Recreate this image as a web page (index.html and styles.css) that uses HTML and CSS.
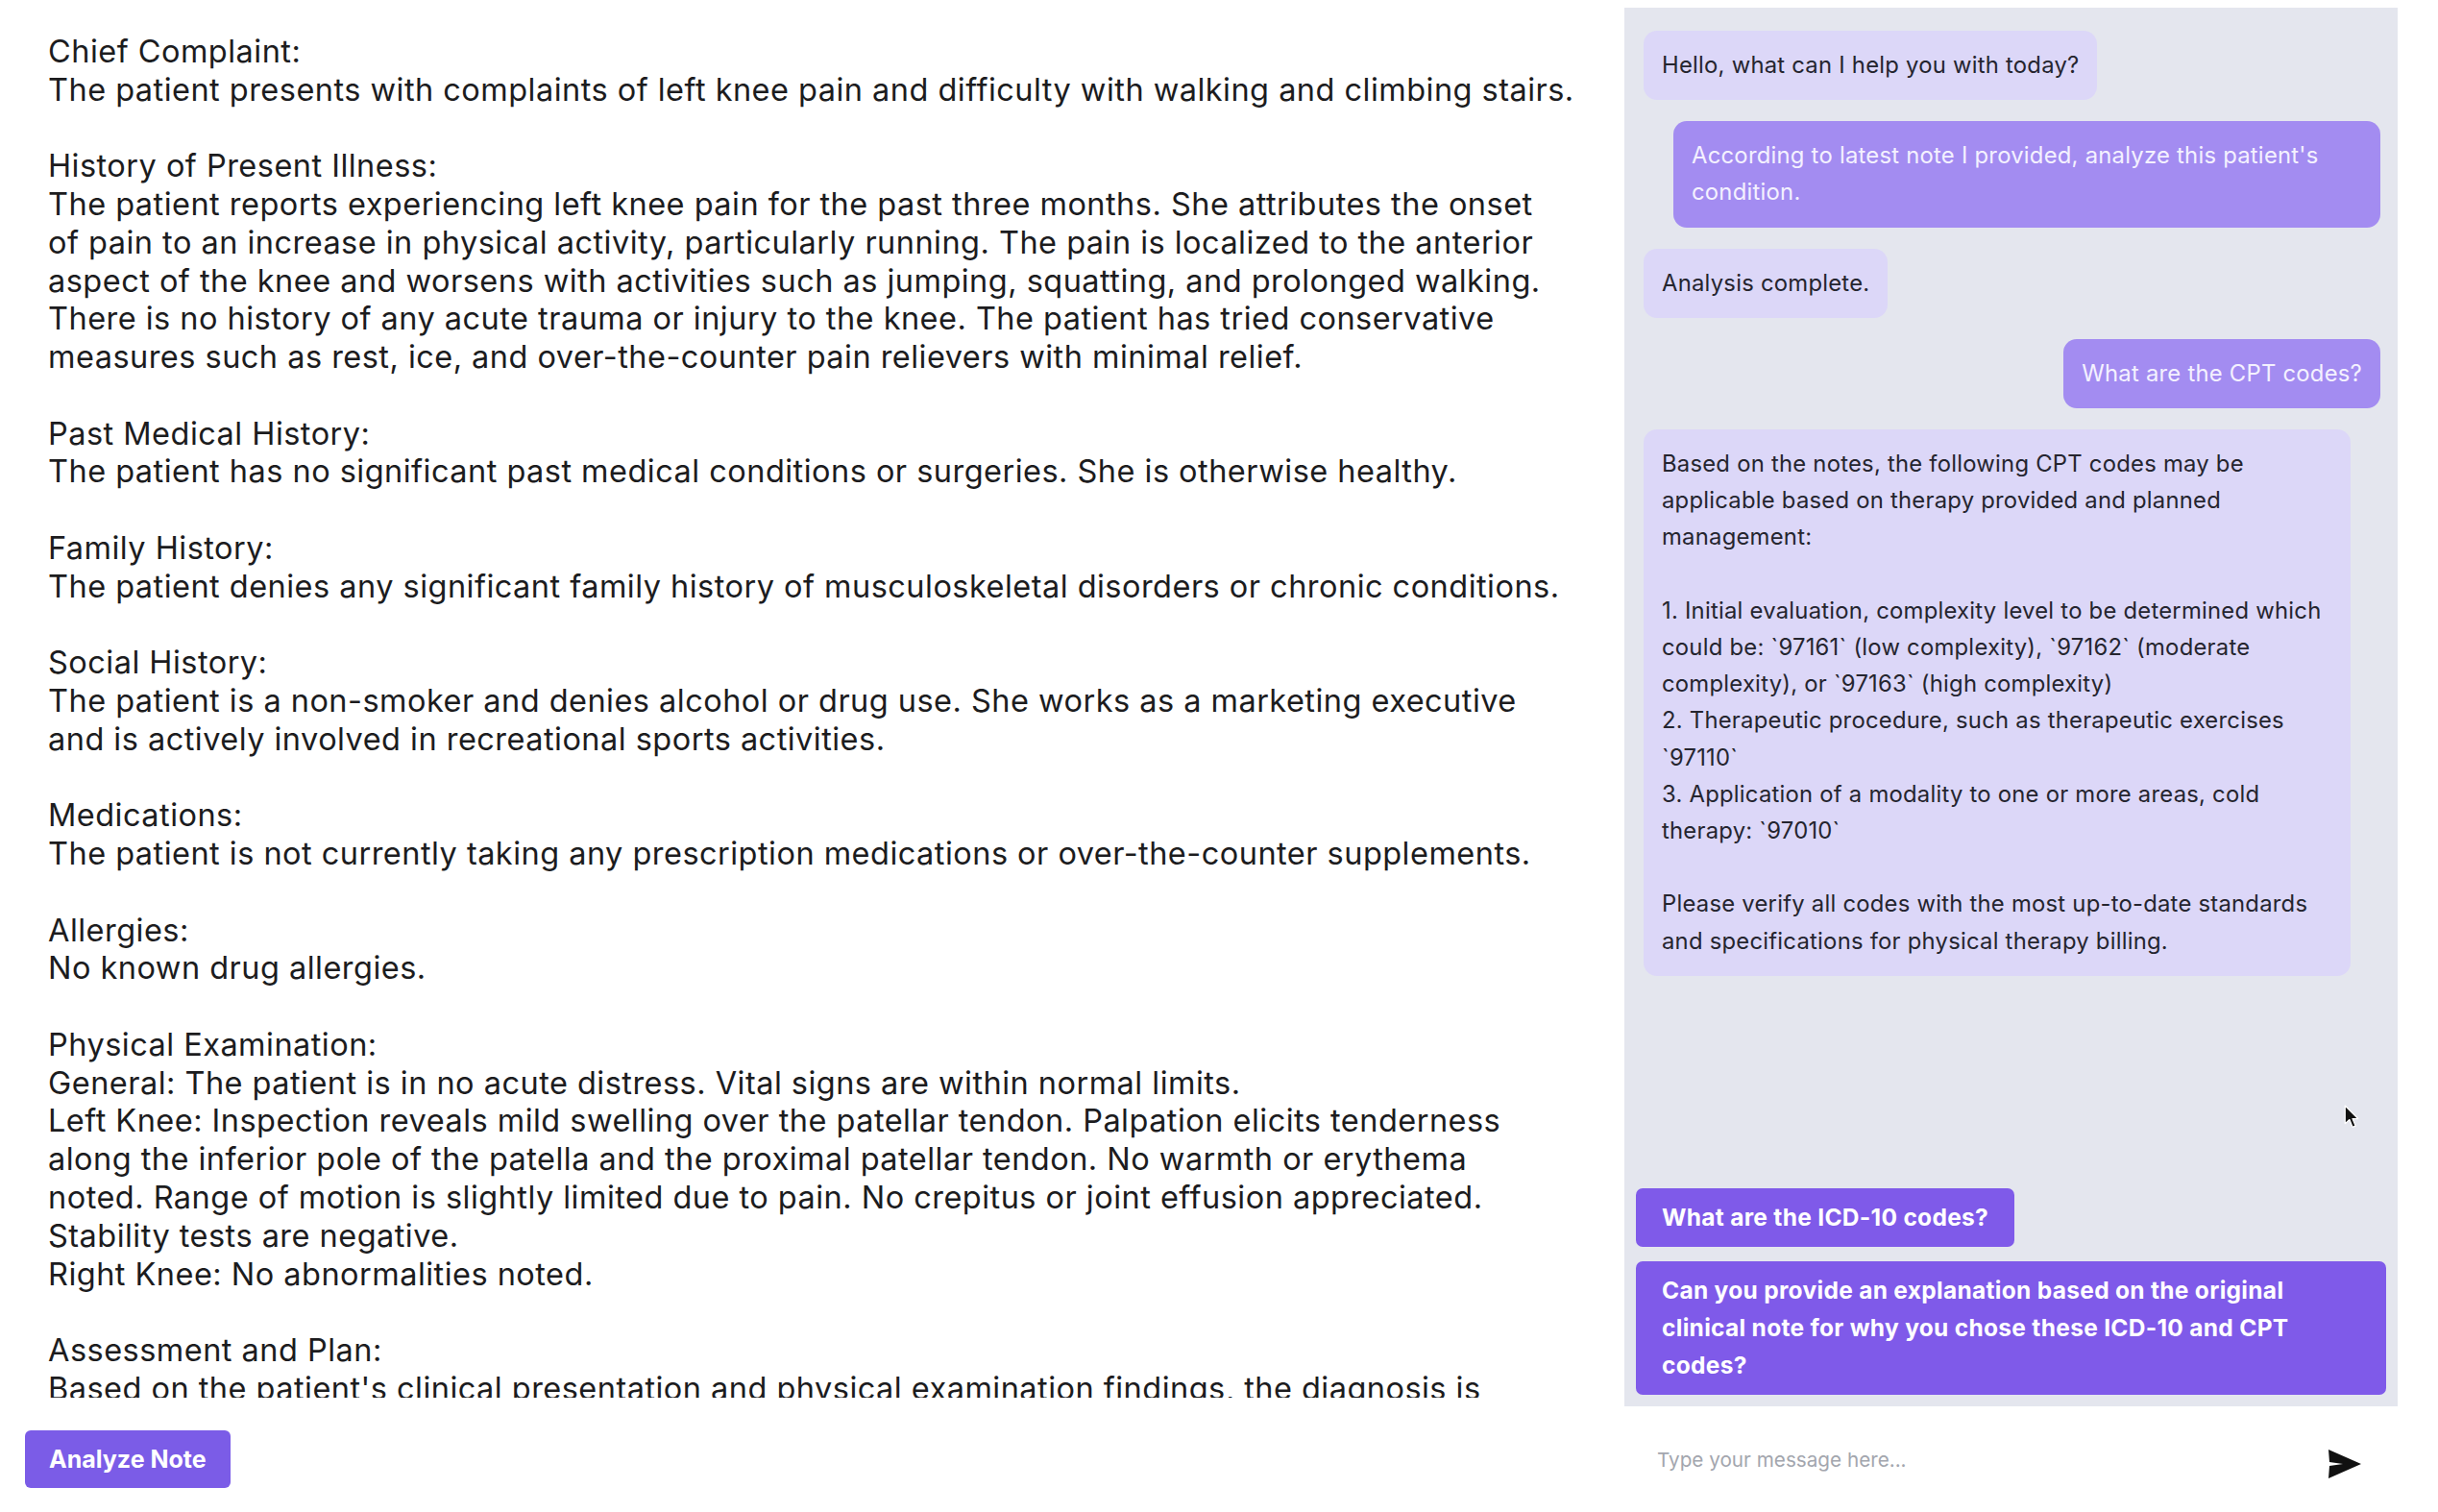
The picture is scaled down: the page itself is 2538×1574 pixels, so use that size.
FILE: index.html
```html
<!DOCTYPE html>
<html lang="en">
<head>
<meta charset="utf-8">
<title>Clinical Note Assistant</title>
<link rel="stylesheet" href="styles.css">
</head>
<body>
<div class="app">
  <section class="editor">
    <div class="note">Chief Complaint:
The patient presents with complaints of left knee pain and difficulty with walking and climbing stairs.

History of Present Illness:
The patient reports experiencing left knee pain for the past three months. She attributes the onset
of pain to an increase in physical activity, particularly running. The pain is localized to the anterior
aspect of the knee and worsens with activities such as jumping, squatting, and prolonged walking.
There is no history of any acute trauma or injury to the knee. The patient has tried conservative
measures such as rest, ice, and over-the-counter pain relievers with minimal relief.

Past Medical History:
The patient has no significant past medical conditions or surgeries. She is otherwise healthy.

Family History:
The patient denies any significant family history of musculoskeletal disorders or chronic conditions.

Social History:
The patient is a non-smoker and denies alcohol or drug use. She works as a marketing executive
and is actively involved in recreational sports activities.

Medications:
The patient is not currently taking any prescription medications or over-the-counter supplements.

Allergies:
No known drug allergies.

Physical Examination:
General: The patient is in no acute distress. Vital signs are within normal limits.
Left Knee: Inspection reveals mild swelling over the patellar tendon. Palpation elicits tenderness
along the inferior pole of the patella and the proximal patellar tendon. No warmth or erythema
noted. Range of motion is slightly limited due to pain. No crepitus or joint effusion appreciated.
Stability tests are negative.
Right Knee: No abnormalities noted.

Assessment and Plan:
Based on the patient's clinical presentation and physical examination findings, the diagnosis is
consistent with left patellar tendinopathy.</div>
    <button class="analyze" type="button">Analyze Note</button>
  </section>

  <aside class="chat">
    <div class="panel">
      <div class="messages">
        <div class="msg bot">Hello, what can I help you with today?</div>
        <div class="msg user">According to latest note I provided, analyze this patient's condition.</div>
        <div class="msg bot">Analysis complete.</div>
        <div class="msg user">What are the CPT codes?</div>
        <div class="msg bot long">Based on the notes, the following CPT codes may be
applicable based on therapy provided and planned
management:

1. Initial evaluation, complexity level to be determined which
could be: `97161` (low complexity), `97162` (moderate
complexity), or `97163` (high complexity)
2. Therapeutic procedure, such as therapeutic exercises
`97110`
3. Application of a modality to one or more areas, cold
therapy: `97010`

Please verify all codes with the most up-to-date standards
and specifications for physical therapy billing.</div>
      </div>
      <div class="suggestions">
        <button class="suggestion" type="button">What are the ICD-10 codes?</button>
        <button class="suggestion" type="button">Can you provide an explanation based on the original clinical note for why you chose these ICD-10 and CPT codes?</button>
      </div>
    </div>
    <div class="composer">
      <input class="composer-input" type="text" placeholder="Type your message here...">
      <button class="send" type="button" aria-label="Send">
        <svg width="34" height="30" viewBox="0 0 34 30"><path d="M0 0 L34 15 L0 30 L1 17 L15 15 L1 13 Z" fill="#111"/></svg>
      </button>
    </div>
  </aside>
</div>
<svg class="cursor" width="17" height="27" viewBox="0 0 16 26"><path d="M1 1 L1 19 L5.5 15 L8.5 22.5 L11.5 21.3 L8.5 14 L14 14 Z" fill="#111" stroke="#fff" stroke-width="1.2" stroke-linejoin="round"/></svg>
</body>
</html>
```

FILE: styles.css
```css
* { box-sizing: border-box; }

html, body {
  margin: 0;
  padding: 0;
  background: #ffffff;
}

body {
  width: 2538px;
  height: 1574px;
  overflow: hidden;
  position: relative;
  font-family: Inter, "Noto Sans", "Liberation Sans", sans-serif;
  color: #1f1f23;
}

.app {
  display: flex;
  height: 1574px;
}

.editor {
  width: 1691px;
  padding: 8px 0 0 26px;
  display: flex;
  flex-direction: column;
  align-items: flex-start;
}

.note {
  width: 1665px;
  height: 1447px;
  padding: 26px 0 0 24px;
  overflow: hidden;
  white-space: pre;
  font-size: 32.5px;
  letter-spacing: 0.47px;
  line-height: 39.77px;
  color: #1c1c1e;
}

.analyze {
  margin-top: 34px;
  height: 60px;
  padding: 0 25px;
  border: none;
  border-radius: 6px;
  background: #7b5ce7;
  color: #ffffff;
  font-family: inherit;
  font-size: 25px;
  font-weight: 700;
}

.chat {
  width: 805px;
  display: flex;
  flex-direction: column;
}

.panel {
  margin-top: 8px;
  height: 1456px;
  background: #e4e6ee;
  padding: 12px;
  display: flex;
  flex-direction: column;
}

.messages {
  flex: 1;
  padding: 12px 6px 0 8px;
  display: flex;
  flex-direction: column;
  align-items: flex-start;
  gap: 22px;
}

.msg {
  max-width: 736px;
  padding: 17px 19px;
  border-radius: 14px;
  font-size: 23.8px;
  letter-spacing: 0.25px;
  line-height: 38.2px;
}

.msg.bot {
  background: #dcd7f8;
  color: #25252f;
}

.msg.user {
  align-self: flex-end;
  background: #a38cf1;
  color: #f4f1ff;
}

.msg.long {
  width: 736px;
  white-space: pre-line;
}

.suggestions {
  display: flex;
  flex-direction: column;
  align-items: flex-start;
  gap: 15px;
}

.suggestion {
  border: none;
  border-radius: 7px;
  background: #7f5ae9;
  color: #ffffff;
  text-align: left;
  font-family: inherit;
  font-size: 24.5px;
  letter-spacing: 0.3px;
  font-weight: 700;
  line-height: 39px;
  padding: 11px 27px;
}

.composer {
  flex: 1;
  display: flex;
  align-items: center;
  padding: 0 38px 0 34px;
}

.composer-input {
  flex: 1;
  border: none;
  outline: none;
  background: transparent;
  font-family: inherit;
  font-size: 20.7px;
  color: #333;
  padding: 0;
}

.composer-input::placeholder {
  color: #a3a6ae;
}

.send {
  border: none;
  background: transparent;
  padding: 9px 0 0 0;
  display: flex;
  align-items: center;
}

.cursor {
  position: absolute;
  left: 2440px;
  top: 1150px;
}
```
